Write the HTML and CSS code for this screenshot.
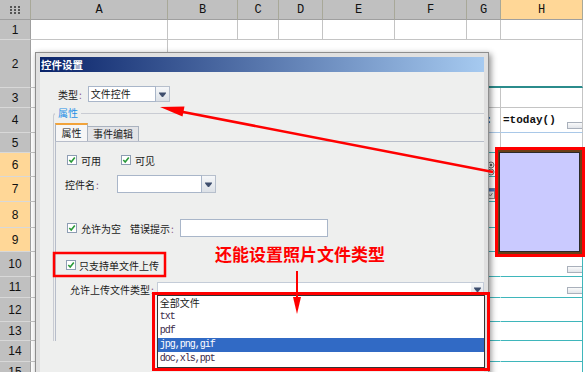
FILE: index.html
```html
<!DOCTYPE html>
<html lang="zh-CN">
<head>
    <meta charset="UTF-8">
    <title>控件设置</title>
    <link rel="stylesheet" href="styles.css">
</head>
<body>
    <div class="grid">
        <div class="ch corner">
            <svg width="10" height="8" viewBox="0 0 10 8"><g fill="#555"><rect x="0" y="0" width="2" height="2"/><rect x="4" y="0" width="2" height="2"/><rect x="8" y="0" width="2" height="2"/><rect x="0" y="3" width="2" height="2"/><rect x="4" y="3" width="2" height="2"/><rect x="8" y="3" width="2" height="2"/><rect x="0" y="6" width="2" height="2"/><rect x="4" y="6" width="2" height="2"/><rect x="8" y="6" width="2" height="2"/></g></svg>
        </div>
        <div class="ch">A</div><div class="ch">B</div><div class="ch">C</div><div class="ch">D</div><div class="ch">E</div><div class="ch">F</div><div class="ch">G</div><div class="ch hl">H</div><div class="end"></div>

        <div class="rh">1</div><div class="c"></div><div class="c"></div><div class="c"></div><div class="c"></div><div class="c"></div><div class="c"></div><div class="c"></div><div class="c"></div><div class="end"></div>
        <div class="rh">2</div><div class="c"></div><div class="c span7 dbl"></div><div class="end"></div>
        <div class="rh">3</div><div class="c"></div><div class="c"></div><div class="c"></div><div class="c"></div><div class="c"></div><div class="c"></div><div class="c"></div><div class="c"></div><div class="end"></div>
        <div class="rh">4</div><div class="c"></div><div class="c"></div><div class="c"></div><div class="c"></div><div class="c"></div><div class="c"></div><div class="c lb colon">:</div><div class="c lb fx"><span class="formula">=today()</span><i class="mini"></i></div><div class="end"></div>
        <div class="rh">5</div><div class="c"></div><div class="c"></div><div class="c"></div><div class="c"></div><div class="c"></div><div class="c"></div><div class="c tb"></div><div class="c"></div><div class="end"></div>
        <div class="rh hl">6</div><div class="c"></div><div class="c"></div><div class="c"></div><div class="c"></div><div class="c"></div><div class="c"></div>
        <div class="c tb gic">
            <svg width="8" height="23" viewBox="0 0 8 23"><circle cx="4" cy="12" r="3" fill="#eee" stroke="#777"/><circle cx="4" cy="12" r="1.2" fill="#555"/><circle cx="4" cy="19" r="3" fill="#eee" stroke="#777"/></svg>
        </div>
        <div class="c"></div><div class="end"></div>
        <div class="rh hl">7</div><div class="c"></div><div class="c"></div><div class="c"></div><div class="c"></div><div class="c"></div><div class="c"></div>
        <div class="c tb gic">
            <svg width="9" height="24" viewBox="0 0 9 24"><rect x="0.5" y="11.5" width="8" height="10" fill="#e8e8e8" stroke="#8a8a8a"/><rect x="0.5" y="11.5" width="8" height="3" fill="#4b78b8"/><path d="M2.5 17l2 2 2-3" stroke="#777" fill="none"/></svg>
        </div>
        <div class="c"></div><div class="end"></div>
        <div class="rh hl">8</div><div class="c"></div><div class="c"></div><div class="c"></div><div class="c"></div><div class="c"></div><div class="c"></div><div class="c tb"></div><div class="c"></div><div class="end"></div>
        <div class="rh hl">9</div><div class="c"></div><div class="c"></div><div class="c"></div><div class="c"></div><div class="c"></div><div class="c"></div><div class="c tb"></div><div class="c"></div><div class="end"></div>
        <div class="rh">10</div><div class="c"></div><div class="c"></div><div class="c"></div><div class="c"></div><div class="c"></div><div class="c"></div><div class="c tg"></div><div class="c th fx"><i class="mini"></i></div><div class="end"></div>
        <div class="rh">11</div><div class="c"></div><div class="c"></div><div class="c"></div><div class="c"></div><div class="c"></div><div class="c"></div><div class="c tg"></div><div class="c th fx"><i class="mini"></i></div><div class="end"></div>
        <div class="rh">12</div><div class="c"></div><div class="c"></div><div class="c"></div><div class="c"></div><div class="c"></div><div class="c"></div><div class="c tg"></div><div class="c th"></div><div class="end"></div>
        <div class="rh">13</div><div class="c"></div><div class="c"></div><div class="c"></div><div class="c"></div><div class="c"></div><div class="c"></div><div class="c tg"></div><div class="c th"></div><div class="end"></div>
        <div class="rh">14</div><div class="c"></div><div class="c"></div><div class="c"></div><div class="c"></div><div class="c"></div><div class="c"></div><div class="c tg"></div><div class="c th"></div><div class="end"></div>
        <div class="rh">15</div><div class="c"></div><div class="c"></div><div class="c"></div><div class="c"></div><div class="c"></div><div class="c"></div><div class="c tg"></div><div class="c th"></div><div class="end"></div>
    </div>

    <!-- image control on the sheet -->
    <div class="pic"></div>

    <div class="dlg">
        <div class="dlg-title">控件设置</div>
        <div class="dlg-body">
            <div class="type-row">
                <span class="lbl">类型<i class="colon-c">:</i></span>
                <div class="combo type-combo">
                    <span class="txt">文件控件</span>
                    <span class="drop"><svg width="7" height="5" viewBox="0 0 7 5"><path d="M0 0h7M0.5 1.5h6L3.5 5z" stroke="#3d4d6d" stroke-width="1" fill="#3d4d6d"/></svg></span>
                </div>
            </div>

            <fieldset class="group">
                <legend>属性</legend>
                <div class="tabs">
                    <span class="tab on">属性</span>
                    <span class="tab">事件编辑</span>
                </div>
                <div class="panel">
                    <div class="prow r-checks">
                        <span class="cb"><svg width="8" height="8" viewBox="0 0 8 8"><path d="M1.3 4l1.9 2.1 3.6-4.6"/></svg></span>
                        <span class="cb-lbl">可用</span>
                        <span class="cb second"><svg width="8" height="8" viewBox="0 0 8 8"><path d="M1.3 4l1.9 2.1 3.6-4.6"/></svg></span>
                        <span class="cb-lbl">可见</span>
                    </div>
                    <div class="prow r-name">
                        <span class="lbl">控件名<i class="colon-c">:</i></span>
                        <div class="combo name-combo">
                            <span class="txt"></span>
                            <span class="drop"><svg width="7" height="5" viewBox="0 0 7 5"><path d="M0 0h7M0.5 1.5h6L3.5 5z" stroke="#3d4d6d" stroke-width="1" fill="#3d4d6d"/></svg></span>
                        </div>
                    </div>
                    <div class="prow r-empty">
                        <span class="cb"><svg width="8" height="8" viewBox="0 0 8 8"><path d="M1.3 4l1.9 2.1 3.6-4.6"/></svg></span>
                        <span class="cb-lbl">允许为空</span>
                        <span class="lbl err">错误提示<i class="colon-c">:</i></span>
                        <span class="inp"></span>
                    </div>
                    <div class="prow r-single">
                        <span class="cb"><svg width="8" height="8" viewBox="0 0 8 8"><path d="M1.3 4l1.9 2.1 3.6-4.6"/></svg></span>
                        <span class="cb-lbl">只支持单文件上传</span>
                    </div>
                    <div class="prow r-types">
                        <span class="lbl">允许上传文件类型<i class="colon-c">:</i></span>
                        <div class="combo types-combo">
                            <span class="txt"></span>
                            <span class="drop"><svg width="7" height="5" viewBox="0 0 7 5"><path d="M0 0h7M0.5 1.5h6L3.5 5z" stroke="#3d4d6d" stroke-width="1" fill="#3d4d6d"/></svg></span>
                            <ul class="list">
                                <li class="cjk">全部文件</li>
                                <li>txt</li>
                                <li>pdf</li>
                                <li class="sel">jpg,png,gif</li>
                                <li>doc,xls,ppt</li>
                            </ul>
                        </div>
                    </div>
                </div>
            </fieldset>
        </div>
    </div>

    <div class="note">还能设置照片文件类型</div>

    <svg class="marks" width="586" height="372" viewBox="0 0 586 372">
        <g fill="none" stroke="#f00">
            <rect x="54" y="253" width="111" height="23" stroke-width="2.5"/>
            <rect x="153.5" y="293.5" width="335" height="76" stroke-width="3"/>
            <rect x="496.5" y="148.5" width="87" height="107" stroke-width="3"/>
            <line x1="493" y1="172" x2="178" y2="111" stroke-width="2.5"/>
            <line x1="297" y1="271" x2="297" y2="300" stroke-width="2"/>
        </g>
        <g fill="#f00">
            <polygon points="160,107 184.5,106.5 182.5,116.5"/>
            <polygon points="297,314 293,297 301,297"/>
        </g>
    </svg>
</body>
</html>
```

FILE: styles.css
```css
* {
    box-sizing: border-box;
}

body {
    margin: 0;
    width: 586px;
    height: 372px;
    overflow: hidden;
    position: relative;
    background: #fff;
    font-family: "Noto Sans CJK SC", "Noto Sans", sans-serif;
    font-size: 10px;
    color: #1a1a1a;
}

/* sheet */
.grid {
    display: grid;
    grid-template-columns: 31px 137px 70px 41px 44px 72px 72px 34px 82px 3px;
    grid-template-rows: 20px 20px 48px 20px 25px 20px 24px 25px 26px 24px 25px 21px 24px 19px 21px 20px;
}

.ch {
    background: #c0c0c0;
    border-right: 1px solid #a8a898;
    border-bottom: 1px solid #9f9f9f;
    display: flex;
    align-items: center;
    justify-content: center;
    font: 12px "Liberation Mono", monospace;
    color: #111;
}

.ch.hl {
    background: #ffd797;
}

.rh {
    background: #c0c0c0;
    border-right: 1px solid #9f9f9f;
    border-bottom: 1px solid #d8d8d8;
    display: flex;
    align-items: center;
    justify-content: center;
    font: 12px "Liberation Sans", sans-serif;
    color: #111;
}

.rh.hl {
    background: #ffd797;
}

.c {
    border-right: 1px solid #c4c4c4;
    border-bottom: 1px solid #c4c4c4;
}

.span7 {
    grid-column: span 7;
}

.dbl {
    border-bottom: 2px solid #2b8c8c;
}

.lb {
    border-bottom-color: #a9c8e8;
}

.tb {
    border-bottom-color: #3fb6bb;
}

.tg {
    border-right-color: transparent;
    border-bottom-color: #3fb6bb;
}

.th {
    border-right-color: #3fb6bb;
    border-bottom-color: #3fb6bb;
}

.colon {
    text-align: right;
    padding-right: 8px;
    font: bold 11px/24px "Liberation Mono", monospace;
}

.fx {
    display: flex;
    align-items: center;
    padding-left: 2px;
}

.formula {
    font: bold 11px "Liberation Mono", monospace;
    color: #111;
}

.mini {
    margin-left: auto;
    align-self: flex-end;
    margin-bottom: 3px;
    width: 15px;
    height: 7px;
    border: 1px solid #a9b0bb;
    border-right: 0;
    background: linear-gradient(#fafafa, #e2e5ea);
}

.gic {
    display: flex;
    justify-content: flex-end;
    align-items: flex-start;
    padding-right: 5px;
}

.pic {
    position: absolute;
    left: 497px;
    top: 150px;
    width: 85px;
    height: 104px;
    background: #cacaff;
    border: 2px solid #6a3f18;
    box-shadow: inset 0 0 0 1px #2a2a2a;
}

/* dialog */
.dlg {
    position: absolute;
    left: 35px;
    top: 52px;
    width: 454px;
    height: 330px;
    padding: 4px;
    background: #e0e0e0;
    border: 1px solid #8e8e8e;
    box-shadow: 2px 2px 6px rgba(0, 0, 0, 0.45);
    z-index: 2;
}

.dlg-title {
    height: 15px;
    padding-left: 1px;
    background: linear-gradient(to right, #0a246a, #a6caf0);
    color: #fff;
    font-weight: bold;
    font-size: 10.5px;
    line-height: 15px;
}

.dlg-body {
    background: #eeefee;
    height: 306px;
    padding-top: 14px;
}

.lbl i,
.colon-c {
    font-style: normal;
    color: #8a5a8a;
    padding-left: 1px;
}

.type-row {
    display: flex;
    align-items: center;
    height: 16px;
    padding-left: 18px;
}

.combo {
    position: relative;
    display: flex;
    height: 16px;
}

.combo .txt {
    flex: 1;
    background: #fff;
    border: 1px solid #a9b6c9;
    padding-left: 2px;
    line-height: 14px;
}

.drop {
    width: 14px;
    border: 1px solid #b6bfcc;
    border-left: 0;
    background: linear-gradient(#f5f7f9, #dce1e7);
    display: flex;
    align-items: center;
    justify-content: center;
}

.type-combo {
    width: 82px;
    margin-left: 6px;
}

.group {
    margin: 4px 0 0 13px;
    padding: 3px 0 0 1px;
    border: 1px solid #c9ccd3;
    border-right: 0;
    border-bottom: 0;
    border-radius: 3px 0 0 0;
    min-width: 0;
}

.group legend {
    padding: 0 3px;
    line-height: 14px;
    color: #1e8fe6;
}

.tabs {
    display: flex;
    align-items: flex-end;
    height: 18px;
}

.tab {
    width: 51px;
    height: 15px;
    border: 1px solid #a9b2bf;
    border-left: 0;
    border-bottom: 0;
    background: #e3e4e7;
    text-align: center;
    line-height: 14px;
}

.tab.on {
    width: 33px;
    height: 18px;
    border-left: 1px solid #a9b2bf;
    border-top: 2px solid #f2a33a;
    background: #f6f6f6;
    line-height: 15px;
}

.panel {
    border-top: 1px solid #b7bdca;
    border-left: 1px solid #b7bdca;
    height: 200px;
}

.prow {
    display: flex;
    align-items: center;
}

.cb {
    width: 10px;
    height: 10px;
    border: 1px solid #8d9db3;
    background: #fff;
    display: flex;
    align-items: center;
    justify-content: center;
}

.cb path {
    fill: none;
    stroke: #2a9a3a;
    stroke-width: 1.6;
}

.cb-lbl {
    margin-left: 4px;
}

.cb.second {
    margin-left: 20px;
}

.r-checks {
    margin-top: 12px;
    height: 12px;
    padding-left: 11px;
}

.r-name {
    margin-top: 9px;
    height: 18px;
    padding-left: 9px;
}

.name-combo {
    width: 99px;
    height: 18px;
    margin-left: 18px;
}

.name-combo .txt {
    line-height: 16px;
}

.r-empty {
    margin-top: 26px;
    height: 18px;
    padding-left: 11px;
}

.err {
    margin-left: 9px;
}

.inp {
    width: 148px;
    height: 18px;
    margin-left: 6px;
    background: #fff;
    border: 1px solid #a9b6c9;
}

.r-single {
    margin-top: 20px;
    height: 16px;
    padding-left: 10px;
}

.r-single .cb-lbl {
    margin-left: 3px;
}

.r-types {
    margin-top: 9px;
    height: 14px;
    padding-left: 14px;
}

.types-combo {
    flex: 1;
    height: 14px;
    margin-left: 3px;
}

.types-combo .txt {
    border-color: #c4ccd8;
    border-right: 0;
}

.types-combo .drop {
    width: 13px;
    border-color: #c4ccd8;
}

.list {
    position: absolute;
    left: 0;
    top: 13px;
    width: 328px;
    height: 73px;
    margin: 0;
    padding: 0;
    list-style: none;
    background: #fff;
    border: 1px solid #333;
}

.list li {
    height: 14px;
    padding-left: 2px;
    font: 10px/14px "Liberation Mono", monospace;
    letter-spacing: -1px;
    color: #3b2a4a;
}

.list li.cjk {
    font: 10px/14px "Noto Sans CJK SC", sans-serif;
    letter-spacing: 0;
    color: #1a1a1a;
}

.list li.sel {
    background: #316ac5;
    color: #fff;
}

/* annotations */
.note {
    position: absolute;
    left: 215px;
    top: 243px;
    font: bold 17px/22px "Noto Sans CJK SC", sans-serif;
    color: #f00;
    z-index: 4;
}

.marks {
    position: absolute;
    left: 0;
    top: 0;
    z-index: 5;
}
```
